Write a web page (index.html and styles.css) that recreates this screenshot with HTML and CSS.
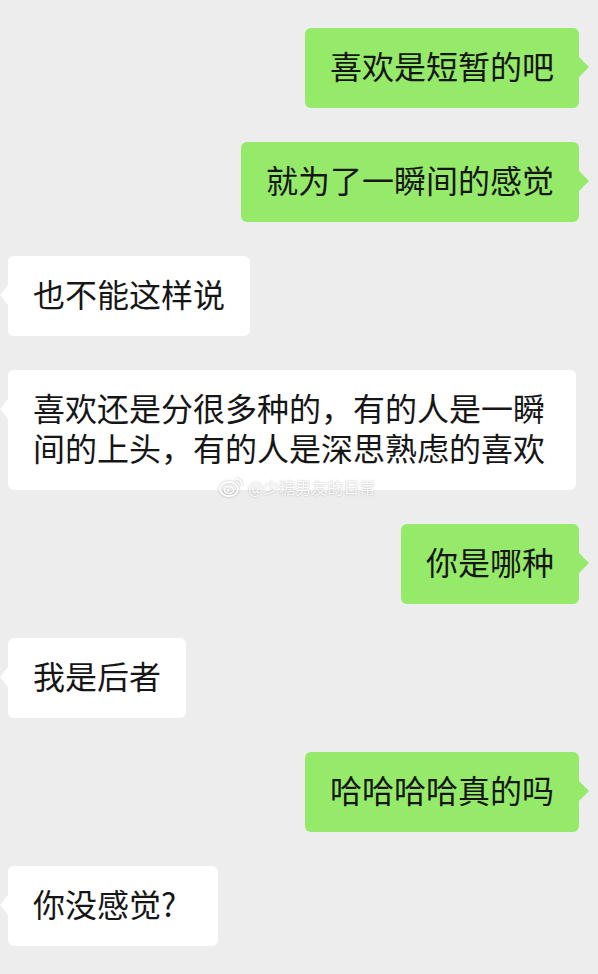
FILE: index.html
```html
<!DOCTYPE html>
<html lang="zh">
<head>
<meta charset="utf-8">
<title>聊天</title>
<link rel="stylesheet" href="styles.css">
</head>
<body>
<div class="chat">
  <div class="msg me"><div class="bubble">喜欢是短暂的吧</div></div>
  <div class="msg me"><div class="bubble">就为了一瞬间的感觉</div></div>
  <div class="msg them"><div class="bubble">也不能这样说</div></div>
  <div class="msg them"><div class="bubble">喜欢还是分很多种的，有的人是一瞬间的上头，有的人是深思熟虑的喜欢</div></div>
  <div class="msg me"><div class="bubble">你是哪种</div></div>
  <div class="msg them"><div class="bubble">我是后者</div></div>
  <div class="msg me"><div class="bubble">哈哈哈哈真的吗</div></div>
  <div class="msg them"><div class="bubble q">你没感觉?</div></div>
  <div class="watermark">
    <svg class="wb" width="26" height="22" viewBox="0 0 26 22">
      <ellipse cx="10" cy="13" rx="9" ry="7" fill="none" stroke="#fff" stroke-width="2"/>
      <ellipse cx="10" cy="14" rx="4.5" ry="3.5" fill="none" stroke="#fff" stroke-width="1.6"/>
      <circle cx="9" cy="14.5" r="1.4" fill="#fff"/>
      <path d="M17 3 a6 6 0 0 1 6 6" fill="none" stroke="#fff" stroke-width="1.8"/>
      <path d="M17 6 a3 3 0 0 1 3 3" fill="none" stroke="#fff" stroke-width="1.6"/>
    </svg>
    <span>@少糖男友的日常</span>
  </div>
</div>
</body>
</html>
```
FILE: styles.css
```css
html, body {
  margin: 0;
  padding: 0;
}
body {
  background: #ededed;
  font-family: "Noto Sans CJK SC", "Noto Sans", sans-serif;
  width: 598px;
  height: 974px;
  overflow: hidden;
}
.chat {
  position: relative;
  display: flex;
  flex-direction: column;
  gap: 34px;
  padding-top: 28px;
}
.msg {
  display: flex;
}
.msg.me {
  justify-content: flex-end;
  padding-right: 19px;
}
.msg.them {
  justify-content: flex-start;
  padding-left: 8px;
}
.bubble {
  position: relative;
  font-size: 32px;
  line-height: 40px;
  padding: 17px 25px 23px;
  border-radius: 6px;
  color: #161616;
  max-width: 518px;
}
.me .bubble {
  background: #95ea6a;
}
.them .bubble {
  background: #ffffff;
}
.bubble.q {
  padding-right: 42px;
}
.me .bubble::after {
  content: "";
  position: absolute;
  top: 29px;
  right: -10px;
  border-top: 10px solid transparent;
  border-bottom: 10px solid transparent;
  border-left: 10px solid #95ea6a;
}
.them .bubble::after {
  content: "";
  position: absolute;
  top: 29px;
  left: -8px;
  border-top: 10px solid transparent;
  border-bottom: 10px solid transparent;
  border-right: 8px solid #ffffff;
}
.watermark {
  position: absolute;
  left: 219px;
  top: 476px;
  display: flex;
  align-items: center;
  gap: 3px;
  color: rgba(255, 255, 255, 0.95);
  font-size: 16px;
  line-height: 20px;
  text-shadow: 0 0 2px rgba(0, 0, 0, 0.3);
}
.wb {
  filter: drop-shadow(0 0 1px rgba(0, 0, 0, 0.3));
}
```
